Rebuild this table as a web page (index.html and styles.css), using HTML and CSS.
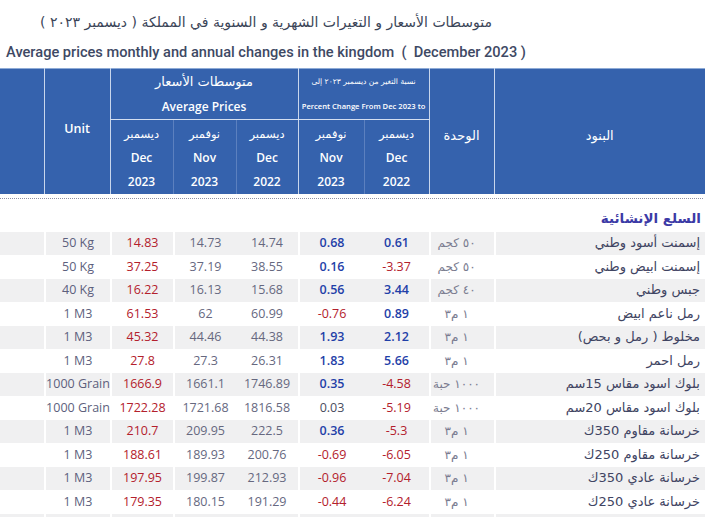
FILE: index.html
```html
<!DOCTYPE html>
<html lang="ar">
<head>
<meta charset="utf-8">
<title>Average prices</title>
<link rel="stylesheet" href="styles.css">
</head>
<body>
<div class="page">
  <div class="titles">
    <h2 class="title-ar" dir="rtl">متوسطات الأسعار و التغيرات الشهرية و السنوية في المملكة ( ديسمبر ٢٠٢٣ )</h2>
    <h1 class="title-en">Average prices monthly and annual changes in the kingdom&nbsp; ( &nbsp;December 2023 )</h1>
  </div>

  <table class="head">
    <colgroup>
      <col class="c0"><col class="c1"><col class="c2"><col class="c3"><col class="c4"><col class="c5"><col class="c6"><col class="c7"><col class="c8">
    </colgroup>
    <tr class="hr1">
      <th rowspan="2" class="major"></th>
      <th rowspan="2" class="major unit-h">Unit</th>
      <th colspan="3" class="major grp"><div class="ar big" dir="rtl">متوسطات الأسعار</div><div>Average Prices</div></th>
      <th colspan="2" class="major grp tiny"><div class="ar" dir="rtl">نسبة التغير من ديسمبر ٢٠٢٣ إلى</div><div>Percent Change From Dec 2023 to</div></th>
      <th rowspan="2" class="major ar-h" dir="rtl">الوحدة</th>
      <th rowspan="2" class="major ar-h" dir="rtl">البنود</th>
    </tr>
    <tr class="hr2">
      <th class="sub"><div class="ar" dir="rtl">ديسمبر</div><div>Dec</div><div>2023</div></th>
      <th class="sub minor"><div class="ar" dir="rtl">نوفمبر</div><div>Nov</div><div>2023</div></th>
      <th class="sub minor"><div class="ar" dir="rtl">ديسمبر</div><div>Dec</div><div>2022</div></th>
      <th class="sub"><div class="ar" dir="rtl">نوفمبر</div><div>Nov</div><div>2023</div></th>
      <th class="sub minor"><div class="ar" dir="rtl">ديسمبر</div><div>Dec</div><div>2022</div></th>
    </tr>
  </table>

  <div class="dots"></div>
  <div class="section" dir="rtl">السلع الإنشائية</div>

  <table class="body">
    <colgroup>
      <col class="c0"><col class="c1"><col class="c2"><col class="c3"><col class="c4"><col class="c5"><col class="c6"><col class="c7"><col class="c8">
    </colgroup>
    <tr class="g"><td></td><td class="gl unit">50 Kg</td><td class="gl red">14.83</td><td class="gl num">14.73</td><td class="num">14.74</td><td class="gl pos">0.68</td><td class="pos">0.61</td><td class="gl uar" dir="rtl">٥٠ كجم</td><td class="gl item" dir="rtl">إسمنت أسود وطني</td></tr>
    <tr><td></td><td class="gl unit">50 Kg</td><td class="gl red">37.25</td><td class="gl num">37.19</td><td class="num">38.55</td><td class="gl pos">0.16</td><td class="neg">-3.37</td><td class="gl uar" dir="rtl">٥٠ كجم</td><td class="gl item" dir="rtl">إسمنت ابيض وطني</td></tr>
    <tr class="g"><td></td><td class="gl unit">40 Kg</td><td class="gl red">16.22</td><td class="gl num">16.13</td><td class="num">15.68</td><td class="gl pos">0.56</td><td class="pos">3.44</td><td class="gl uar" dir="rtl">٤٠ كجم</td><td class="gl item" dir="rtl">جبس وطني</td></tr>
    <tr><td></td><td class="gl unit">1 M3</td><td class="gl red">61.53</td><td class="gl num">62</td><td class="num">60.99</td><td class="gl neg">-0.76</td><td class="pos">0.89</td><td class="gl uar" dir="rtl">١ م٣</td><td class="gl item" dir="rtl">رمل ناعم ابيض</td></tr>
    <tr class="g"><td></td><td class="gl unit">1 M3</td><td class="gl red">45.32</td><td class="gl num">44.46</td><td class="num">44.38</td><td class="gl pos">1.93</td><td class="pos">2.12</td><td class="gl uar" dir="rtl">١ م٣</td><td class="gl item" dir="rtl">مخلوط ( رمل و بحص)</td></tr>
    <tr><td></td><td class="gl unit">1 M3</td><td class="gl red">27.8</td><td class="gl num">27.3</td><td class="num">26.31</td><td class="gl pos">1.83</td><td class="pos">5.66</td><td class="gl uar" dir="rtl">١ م٣</td><td class="gl item" dir="rtl">رمل احمر</td></tr>
    <tr class="g"><td></td><td class="gl unit">1000 Grain</td><td class="gl red">1666.9</td><td class="gl num">1661.1</td><td class="num">1746.89</td><td class="gl pos">0.35</td><td class="neg">-4.58</td><td class="gl uar" dir="rtl">١٠٠٠ حبة</td><td class="gl item" dir="rtl">بلوك اسود مقاس 15سم</td></tr>
    <tr><td></td><td class="gl unit">1000 Grain</td><td class="gl red">1722.28</td><td class="gl num">1721.68</td><td class="num">1816.58</td><td class="gl zero">0.03</td><td class="neg">-5.19</td><td class="gl uar" dir="rtl">١٠٠٠ حبة</td><td class="gl item" dir="rtl">بلوك اسود مقاس 20سم</td></tr>
    <tr class="g"><td></td><td class="gl unit">1 M3</td><td class="gl red">210.7</td><td class="gl num">209.95</td><td class="num">222.5</td><td class="gl pos">0.36</td><td class="neg">-5.3</td><td class="gl uar" dir="rtl">١ م٣</td><td class="gl item" dir="rtl">خرسانة مقاوم 350ك</td></tr>
    <tr><td></td><td class="gl unit">1 M3</td><td class="gl red">188.61</td><td class="gl num">189.93</td><td class="num">200.76</td><td class="gl neg">-0.69</td><td class="neg">-6.05</td><td class="gl uar" dir="rtl">١ م٣</td><td class="gl item" dir="rtl">خرسانة مقاوم 250ك</td></tr>
    <tr class="g"><td></td><td class="gl unit">1 M3</td><td class="gl red">197.95</td><td class="gl num">199.87</td><td class="num">212.93</td><td class="gl neg">-0.96</td><td class="neg">-7.04</td><td class="gl uar" dir="rtl">١ م٣</td><td class="gl item" dir="rtl">خرسانة عادي 350ك</td></tr>
    <tr><td></td><td class="gl unit">1 M3</td><td class="gl red">179.35</td><td class="gl num">180.15</td><td class="num">191.29</td><td class="gl neg">-0.44</td><td class="neg">-6.24</td><td class="gl uar" dir="rtl">١ م٣</td><td class="gl item" dir="rtl">خرسانة عادي 250ك</td></tr>
    <tr class="g"><td></td><td class="gl"></td><td class="gl"></td><td class="gl"></td><td></td><td class="gl"></td><td></td><td class="gl"></td><td class="gl"></td></tr>
  </table>
</div>
</body>
</html>
```

FILE: styles.css
```css
* { box-sizing: border-box; }

html, body {
  margin: 0;
  padding: 0;
  background: #ffffff;
}

body {
  font-family: "Open Sans", "DejaVu Sans", sans-serif;
  color: #5b5d78;
}

.page {
  width: 716px;
  overflow: hidden;
}

.titles {
  width: 532px;
  text-align: center;
  padding-top: 11px;
  margin-bottom: 5px;
}

.title-ar {
  margin: 0;
  font-family: "DejaVu Sans", sans-serif;
  font-weight: normal;
  font-size: 14px;
  line-height: 22px;
  color: #3b4558;
}

.title-en {
  margin: 8px 0 0;
  font-family: Roboto, "Open Sans", sans-serif;
  font-weight: 500;
  font-size: 14.6px;
  line-height: 22px;
  color: #3e4964;
  white-space: nowrap;
}

/* shared column widths */
.c0 { width: 44px; }
.c1 { width: 66px; }
.c2 { width: 63px; }
.c3 { width: 63px; }
.c4 { width: 62px; }
.c5 { width: 66px; }
.c6 { width: 65px; }
.c7 { width: 65px; }
.c8 { width: 211px; }

/* header */
.head {
  width: 705px;
  table-layout: fixed;
  border-collapse: collapse;
  background: #3562ad;
  color: #ffffff;
  border-top: 1px solid #8eabd6;
}

.head th {
  padding: 0;
  font-weight: 600;
  font-size: 12px;
  text-align: center;
  vertical-align: middle;
}

.head th.major {
  border-left: 1px solid #c9d6ec;
}

.head th.major:first-child {
  border-left: 0;
}

.hr1 { height: 50px; }
.hr2 { height: 74px; }

.grp {
  border-bottom: 1px solid #d3def0;
}

.grp div {
  line-height: 25px;
}

.grp .big {
  font-size: 13px;
  font-weight: normal;
}

.ar {
  font-family: "DejaVu Sans", sans-serif;
  font-weight: normal;
}

.tiny div {
  font-size: 7.6px;
  white-space: nowrap;
}

.tiny .ar {
  font-size: 7.6px;
}

.sub {
  padding-top: 2px !important;
}

.sub div {
  line-height: 23.5px;
}

.sub .ar {
  font-size: 11.5px;
}

.head th.sub.minor {
  border-left: 1px solid #5c80bf;
}

.head th.sub:not(.minor) {
  border-left: 1px solid #c9d6ec;
}

.unit-h {
  font-size: 12.5px !important;
  padding-bottom: 5px !important;
}

.ar-h {
  font-family: "DejaVu Sans", sans-serif;
  font-size: 13px !important;
  font-weight: normal !important;
  padding-top: 9px !important;
}

/* divider & section */
.dots {
  margin-top: 4px;
  width: 703px;
  border-top: 1px dotted #8d90a6;
}

.section {
  width: 703px;
  height: 33px;
  padding: 10px 2px 5px 0;
  line-height: 18px;
  font-family: "DejaVu Sans", sans-serif;
  font-weight: bold;
  font-size: 13.5px;
  color: #3c3aa6;
  text-align: right;
}

/* body */
.body {
  width: 705px;
  table-layout: fixed;
  border-collapse: separate;
  border-spacing: 0;
}

.body tr {
  height: 23.5px;
}

.body td {
  padding: 0;
  height: 23.5px;
  line-height: 16px;
  text-align: center;
  font-size: 12.5px;
  white-space: nowrap;
}

.body tr.g td {
  background: #f0f0f1;
}

.body td.gl {
  border-left: 2px solid #ffffff;
}

.unit { color: #5d5f7d; }
.num { color: #66687f; }
.red { color: #b3202c; font-weight: 500; }
.pos { color: #1f3fa8; font-weight: 600; }
.neg { color: #b3202c; font-weight: 500; }
.zero { color: #4a4c5e; font-weight: 500; }

.uar {
  font-family: "DejaVu Sans", sans-serif;
  font-size: 12px !important;
  color: #7a7c90;
  padding-right: 8px !important;
}

.item {
  font-family: "DejaVu Sans", sans-serif;
  font-size: 13px !important;
  color: #404462;
  text-align: right !important;
  padding-right: 3px !important;
}
```
